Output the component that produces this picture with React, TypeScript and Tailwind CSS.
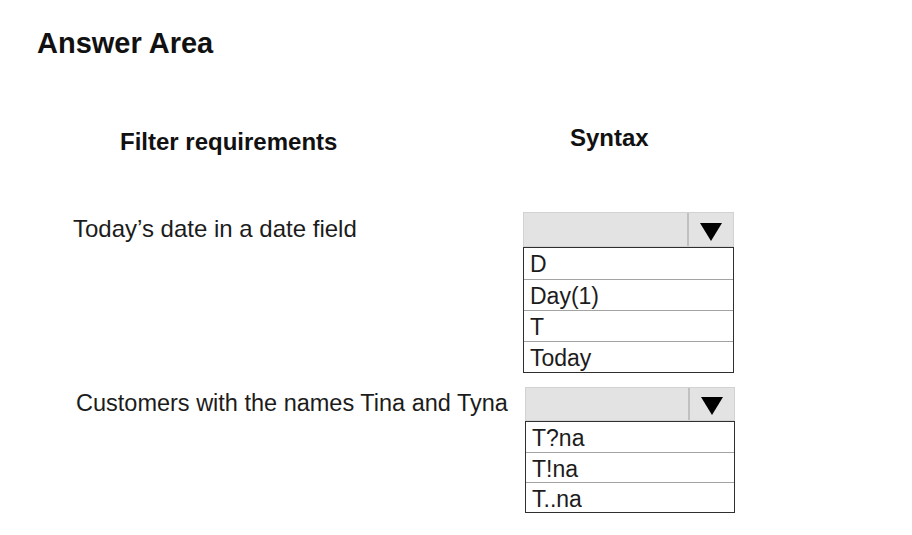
const font = "font-['Liberation_Sans',Arial,sans-serif]";

function Arrow() {
  return (
    <svg width="22" height="18" viewBox="0 0 22 18">
      <path d="M0 0H22L11 18Z" fill="#000" />
    </svg>
  );
}

type DropdownProps = {
  options: string[];
  headerH: string;
  rowH: string;
  width: string;
};

function Dropdown({ options, headerH, rowH, width }: DropdownProps) {
  return (
    <div className={width}>
      {/* closed select */}
      <div className={`flex ${headerH} border border-[#d2d2d2] bg-[#e3e3e3]`}>
        <div className="flex-1 border-r-2 border-[#c0c0c0]" />
        <div className="flex w-[44px] items-center justify-center pt-[4px]">
          <Arrow />
        </div>
      </div>
      {/* options */}
      <div className="border-[1.5px] border-[#2f2f2f] bg-white">
        {options.map((o, i) => (
          <div
            key={o}
            className={`${rowH} pl-[6px] pt-[2px] text-[23px] text-[#1c1c1c] ${
              i > 0 ? 'border-t border-[#a3a3a3]' : ''
            }`}
          >
            {o}
          </div>
        ))}
      </div>
    </div>
  );
}

export default function App() {
  return (
    <div className={`h-[535px] w-[912px] overflow-hidden bg-white ${font}`}>
      <h1 className="pl-[37px] pt-[29px] text-[29px] font-bold leading-none text-[#111]">
        Answer Area
      </h1>

      {/* column headings */}
      <div className="mt-[68px] flex items-start">
        <div className="ml-[120px] mt-[4px] w-[450px] text-[24px] font-bold leading-none text-[#111]">
          Filter requirements
        </div>
        <div className="text-[24px] font-bold leading-none text-[#111]">Syntax</div>
      </div>

      {/* row 1 */}
      <div className="mt-[58px] flex items-start">
        <div className="ml-[73px] mt-[5px] w-[450px] text-[24px] leading-none text-[#1c1c1c]">
          Today’s date in a date field
        </div>
        <Dropdown
          options={['D', 'Day(1)', 'T', 'Today']}
          headerH="h-[35px]"
          rowH="h-[31px] leading-[29px]"
          width="w-[211px]"
        />
      </div>

      {/* row 2 */}
      <div className="mt-[14px] flex items-start">
        <div className="ml-[76px] mt-[5px] w-[449px] whitespace-nowrap text-[23.5px] leading-none text-[#1c1c1c]">
          Customers with the names Tina and Tyna
        </div>
        <Dropdown
          options={['T?na', 'T!na', 'T..na']}
          headerH="h-[34px]"
          rowH="h-[30px] leading-[28px]"
          width="w-[210px]"
        />
      </div>
    </div>
  );
}
